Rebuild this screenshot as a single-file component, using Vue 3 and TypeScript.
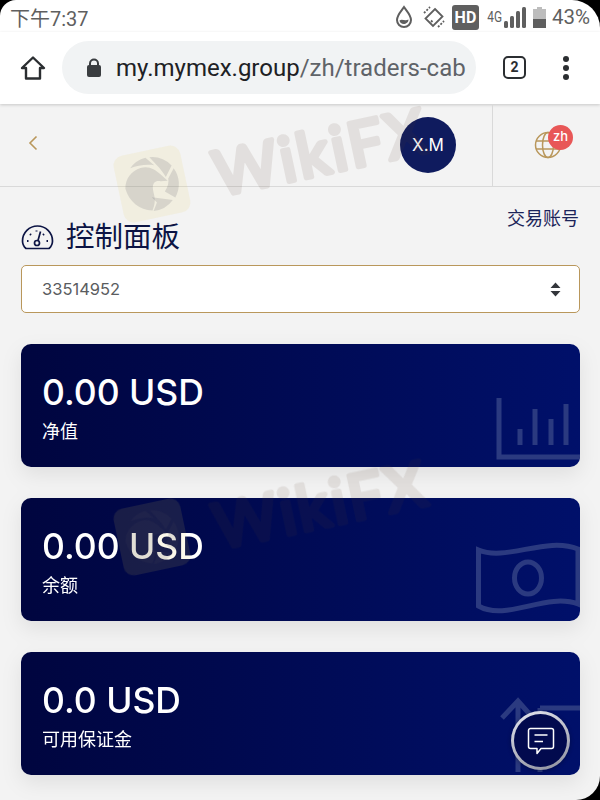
<script setup lang="ts">
interface Stat {
  value: string
  label: string
  icon: 'chart' | 'money' | 'margin'
}

const stats: Stat[] = [
  { value: '0.00 USD', label: '净值', icon: 'chart' },
  { value: '0.00 USD', label: '余额', icon: 'money' },
  { value: '0.0 USD', label: '可用保证金', icon: 'margin' },
]

const watermarks = ['wm-top', 'wm-bottom']
</script>

<template>
  <div class="screen">
    <div class="status">
      <span class="time">下午7:37</span>
      <div class="status-right">
        <svg width="18" height="24" viewBox="0 0 18 24" fill="none" stroke="#5f5f5f" stroke-width="2">
          <path d="M9 2 C6 6.500 2 10 2 15 A7 7 0 0 0 16 15 C16 10 12 6.500 9 2 Z" />
          <path d="M4.500 15.500 C7 13.500 10 16.500 13.500 14.500 C13.500 20 5 20.500 4.500 15.500 Z" fill="#5f5f5f" stroke="none" />
        </svg>
        <svg class="rot" width="24" height="24" viewBox="0 0 24 24" fill="none" stroke="#5f5f5f" stroke-width="1.800">
          <path d="M13 4 L20.500 11.500 L11 21 L3.500 13.500 Z" />
          <path d="M9 15.500 L10.500 17" />
          <path d="M2 8 L8 2 M16 22 L22 16" stroke-dasharray="2 1.500" />
        </svg>
        <span class="hd">HD</span>
        <span class="net">4G</span>
        <svg class="signal" width="22" height="21" viewBox="0 0 22 21" fill="#5f5f5f">
          <rect x="0" y="14" width="4" height="7" rx="1.500" />
          <rect x="6" y="9" width="4" height="12" rx="1.500" />
          <rect x="12" y="4" width="4" height="17" rx="1.500" />
          <rect x="18" y="0" width="4" height="21" rx="1.500" />
        </svg>
        <svg class="battery" width="13" height="21" viewBox="0 0 13 21">
          <rect x="4" y="0" width="5" height="2" fill="#bdbdbd" />
          <rect x="0" y="2" width="13" height="10" fill="#bdbdbd" />
          <rect x="0" y="12" width="13" height="9" fill="#5f5f5f" />
        </svg>
        <span class="pct">43%</span>
      </div>
    </div>

    <div class="browser">
      <svg class="home" width="26" height="26" viewBox="0 0 26 26" fill="none" stroke="#2b2e31" stroke-width="2.400" stroke-linejoin="round">
        <path d="M13 2.500 L24 13 H20 V23.500 H6 V13 H2 Z" />
      </svg>
      <div class="url">
        <svg width="16" height="20" viewBox="0 0 16 20" fill="#3a3d40">
          <rect x="1" y="7" width="14" height="12" rx="2" />
          <path d="M4 8 V5.500 A4 4 0 0 1 12 5.500 V8" fill="none" stroke="#3a3d40" stroke-width="2" />
        </svg>
        <span class="url-text"><b>my.mymex.group</b>/zh/traders-cab</span>
      </div>
      <div class="tabs">2</div>
      <div class="dots"><i></i><i></i><i></i></div>
    </div>

    <header class="top">
      <svg class="back" width="10" height="16" viewBox="0 0 10 16" fill="none" stroke="#b9975b" stroke-width="1.600">
        <path d="M8.500 1.500 L2 8 L8.500 14.500" />
      </svg>
      <div class="avatar">X.M</div>
      <div class="lang">
        <svg width="28" height="28" viewBox="0 0 28 28" fill="none" stroke="#b9975b" stroke-width="1.500">
          <circle cx="14" cy="14" r="12.500" />
          <ellipse cx="14" cy="14" rx="5.500" ry="12.500" />
          <path d="M2 10 H26 M2 18 H26" />
        </svg>
        <span class="lang-badge">zh</span>
      </div>
    </header>

    <main class="content">
      <div class="title-row">
        <h1>
          <svg width="33" height="26" viewBox="0 0 33 26" fill="none" stroke="#0c1444" stroke-width="1.700">
            <path d="M5 24.500 H28 Q31.500 21.500 31.500 17 A15 15 0 0 0 1.500 17 Q1.500 21.500 5 24.500 Z" />
            <circle cx="16" cy="19" r="2.500" />
            <path d="M17 16.500 L19.500 7.500" />
            <path d="M6 17 H7.500 M9 10 L10 11 M15.500 6.500 V7.500 M23 10 L22 11 M25.500 17 H27" stroke-width="2" />
          </svg>
          控制面板
        </h1>
        <a class="accounts">交易账号</a>
      </div>

      <div class="select">
        <span>33514952</span>
        <svg width="11" height="15" viewBox="0 0 11 15" fill="#33363b">
          <path d="M5.500 0.500 L10.500 6 H0.500 Z M0.500 9 H10.500 L5.500 14.500 Z" />
        </svg>
      </div>

      <section class="cards">
        <article v-for="s in stats" :key="s.label" class="card">
          <div class="value">{{ s.value }}</div>
          <div class="label">{{ s.label }}</div>

          <svg v-if="s.icon === 'chart'" class="bg chart" width="84" height="64" viewBox="0 0 84 64" fill="none" stroke="#2b3a80" stroke-width="5">
            <path d="M3 1 V60 H84" />
            <path d="M24 32 V48 M39 12 V48 M55 22 V48 M70 7 V48" />
          </svg>
          <svg v-else-if="s.icon === 'money'" class="bg money" width="104" height="74" viewBox="0 0 104 74" fill="none" stroke="#2b3a80" stroke-width="5">
            <path d="M2.500 8 C30 20 70 -6 102 7 V62 C70 50 30 80 2.500 64 Z" />
            <ellipse cx="52" cy="36" rx="13.500" ry="16" />
          </svg>
          <svg v-else class="bg margin" width="80" height="76" viewBox="0 0 80 76" fill="none" stroke="#2b3a80" stroke-width="5">
            <path d="M2 22 L18 5 L33 22 M18 5 V76" />
            <path d="M40 12 H80 M40 12 V76 M40 40 H64" />
          </svg>
        </article>
      </section>
    </main>

    <div v-for="w in watermarks" :key="w" class="wm" :class="w">
      <div class="wm-logo">
        <svg width="56" height="56" viewBox="0 0 56 56" fill="rgba(70,70,90,0.15)">
          <path d="M10 8 A27 27 0 0 1 27 1 L34 10 C26 7 17 7 10 8 Z" />
          <path d="M31 1.200 A27 27 0 0 1 51 14 L43 24 C41 17 37 11 31 1.200 Z" />
          <path d="M52.500 17 A27 27 0 0 1 48 46 L39 38 C43 34 45 30 45 26 Z" />
          <path d="M25 41 L45 48 A27 27 0 0 1 24 54.800 L29 47 Z" />
          <path d="M1 27 C3 17 11 11 20 10 C28 9 34 14 38 20 L44 28 L37 27 C32 25 29 27 28 32 C27 38 30 44 23 54 C10 51 2 40 1 27 Z" />
        </svg>
      </div>
      <svg class="wm-text" width="240" height="68" viewBox="0 0 240 68">
        <text x="1" y="60">WikiFX</text>
      </svg>
    </div>

    <button class="chat">
      <svg width="28" height="28" viewBox="0 0 28 28" fill="none" stroke="#fff" stroke-width="1.500" stroke-linejoin="round">
        <path d="M3.500 1.500 H24.500 A2 2 0 0 1 26.500 3.500 V19.500 A2 2 0 0 1 24.500 21.500 H14 L10 26.500 V21.500 H3.500 A2 2 0 0 1 1.500 19.500 V3.500 A2 2 0 0 1 3.500 1.500 Z" />
        <path d="M7.500 8 H20.500 M7.500 14.500 H16" />
      </svg>
    </button>

    <div class="bezel"></div>
  </div>
</template>

<style scoped>
.screen {
  position: relative;
  width: 600px;
  height: 800px;
  overflow: hidden;
  background: #f3f3f3;
  font-family: Inter, 'Noto Sans CJK SC', sans-serif;
}
.status {
  height: 32px;
  padding: 2px 10px 0 10px;
  box-sizing: border-box;
  background: #fff;
  display: flex;
  align-items: center;
  justify-content: space-between;
  color: #5f5f5f;
  font-family: Roboto, 'Noto Sans CJK SC', sans-serif;
}
.time {
  font-size: 20px;
}
.status-right {
  display: flex;
  align-items: center;
}
.rot {
  margin-left: 9px;
}
.hd {
  margin-left: 6px;
  width: 27px;
  height: 25px;
  border-radius: 3px;
  background: #5f5f5f;
  color: #fff;
  font-size: 16px;
  font-weight: 700;
  line-height: 25px;
  text-align: center;
}
.net {
  margin-left: 7px;
  font-size: 14px;
  transform: scaleX(0.85);
  width: 16px;
  text-align: center;
}
.signal {
  margin-left: 2px;
}
.battery {
  margin-left: 7px;
}
.pct {
  margin-left: 6px;
  font-size: 20.500px;
}
.browser {
  height: 72px;
  padding: 9px 0 10px 20px;
  box-sizing: border-box;
  background: #fff;
  display: flex;
  align-items: center;
  box-shadow: 0 1px 3px rgba(0, 0, 0, 0.18);
  position: relative;
}
.url {
  margin-left: 16px;
  width: 414px;
  height: 53px;
  border-radius: 27px;
  background: #f1f3f4;
  display: flex;
  align-items: center;
  gap: 14px;
  padding-left: 24px;
  box-sizing: border-box;
  overflow: hidden;
}
.url-text {
  font-family: Roboto, sans-serif;
  font-size: 24px;
  color: #5f6368;
  white-space: nowrap;
}
.url-text b {
  font-weight: 400;
  color: #202124;
}
.tabs {
  margin-left: 27px;
  width: 23px;
  height: 23px;
  box-sizing: border-box;
  border: 2.500px solid #2b2e31;
  border-radius: 5px;
  font-family: Roboto, sans-serif;
  font-size: 14px;
  font-weight: 700;
  line-height: 18px;
  text-align: center;
  color: #2b2e31;
}
.dots {
  margin-left: 37px;
  display: flex;
  flex-direction: column;
  gap: 3px;
}
.dots i {
  display: block;
  width: 6px;
  height: 6px;
  border-radius: 50%;
  background: #2b2e31;
}
.top {
  position: relative;
  height: 83px;
  box-sizing: border-box;
  border-bottom: 1px solid #d9d9d9;
  display: flex;
  align-items: center;
}
.back {
  margin: 0 0 4px 28px;
}
.avatar {
  margin-left: 362px;
  width: 56px;
  height: 56px;
  border-radius: 50%;
  background: #0f1b5e;
  color: #fff;
  font-size: 17px;
  line-height: 56px;
  text-align: center;
}
.lang {
  margin-left: 36px;
  width: 108px;
  height: 100%;
  border-left: 1px solid #d9d9d9;
  position: relative;
  display: flex;
  align-items: center;
  padding-left: 41px;
  box-sizing: border-box;
}
.lang-badge {
  position: absolute;
  left: 55px;
  top: 21px;
  width: 25px;
  height: 25px;
  border-radius: 50%;
  background: #e85757;
  color: #fff;
  font-size: 13px;
  font-weight: 500;
  line-height: 23px;
  text-align: center;
}
.content {
  padding: 20px 20px 0 21px;
}
.title-row {
  display: flex;
  justify-content: space-between;
  align-items: flex-start;
  height: 58px;
}
h1 {
  margin: 13px 0 0;
  display: flex;
  align-items: center;
  gap: 12px;
  font-size: 28.500px;
  font-weight: 400;
  line-height: 34px;
  color: #0c1444;
}
.accounts {
  font-size: 18px;
  line-height: 24px;
  color: #1b2459;
  margin-right: 1px;
}
.select {
  height: 48px;
  box-sizing: border-box;
  border: 1px solid #b9975b;
  border-radius: 5px;
  background: #fff;
  display: flex;
  align-items: center;
  justify-content: space-between;
  padding: 0 18px 0 20px;
  font-size: 16.500px;
  color: #5a5c60;
}
.cards {
  margin-top: 31px;
  display: flex;
  flex-direction: column;
  gap: 31.500px;
  filter: drop-shadow(0 8px 10px rgba(0, 0, 0, 0.08));
}
.card {
  position: relative;
  height: 122.500px;
  box-sizing: border-box;
  padding: 25.500px 21px 0;
  border-radius: 10px;
  background: linear-gradient(90deg, #00053f 0%, #00106a 100%);
  color: #fff;
  overflow: hidden;
}
.value {
  font-size: 35.500px;
  font-weight: 500;
  line-height: 46px;
}
.label {
  margin-top: 4.500px;
  font-size: 18px;
  line-height: 24px;
}
.bg {
  position: absolute;
  right: 0;
}
.chart {
  bottom: 6px;
}
.money {
  bottom: 5px;
}
.margin {
  bottom: 3px;
}
.wm {
  position: absolute;
  left: 118px;
  display: flex;
  align-items: center;
  gap: 28px;
  transform: rotate(-12deg);
  transform-origin: 34px 34px;
  pointer-events: none;
}
.wm-top {
  top: 150px;
}
.wm-bottom {
  top: 503px;
}
.wm-logo {
  width: 68px;
  height: 68px;
  border-radius: 10px;
  background: rgba(226, 196, 70, 0.11);
  display: flex;
  align-items: center;
  justify-content: center;
}
.wm-text {
  overflow: visible;
  opacity: 0.1;
}
.wm-text text {
  font-family: Lato, sans-serif;
  font-size: 62px;
  font-weight: 400;
  letter-spacing: 3px;
  fill: #5a3c2d;
  stroke: #5a3c2d;
  stroke-width: 5px;
  stroke-linejoin: round;
}
.chat {
  position: absolute;
  left: 511px;
  top: 711px;
  width: 59px;
  height: 59px;
  padding: 0;
  border-radius: 50%;
  border: 3px solid transparent;
  background: linear-gradient(#020a4e, #020a4e) padding-box, linear-gradient(160deg, #e4e6f0, #8d8f9c) border-box;
  display: flex;
  align-items: center;
  justify-content: center;
  box-shadow: 0 1px 4px rgba(0, 0, 0, 0.3);
}
.bezel {
  position: absolute;
  inset: 0;
  border-radius: 16px 28px 24px 0;
  box-shadow: 0 0 0 30px #000;
  pointer-events: none;
}
</style>

<style>
html,
body {
  margin: 0;
  background: #000;
}
</style>
